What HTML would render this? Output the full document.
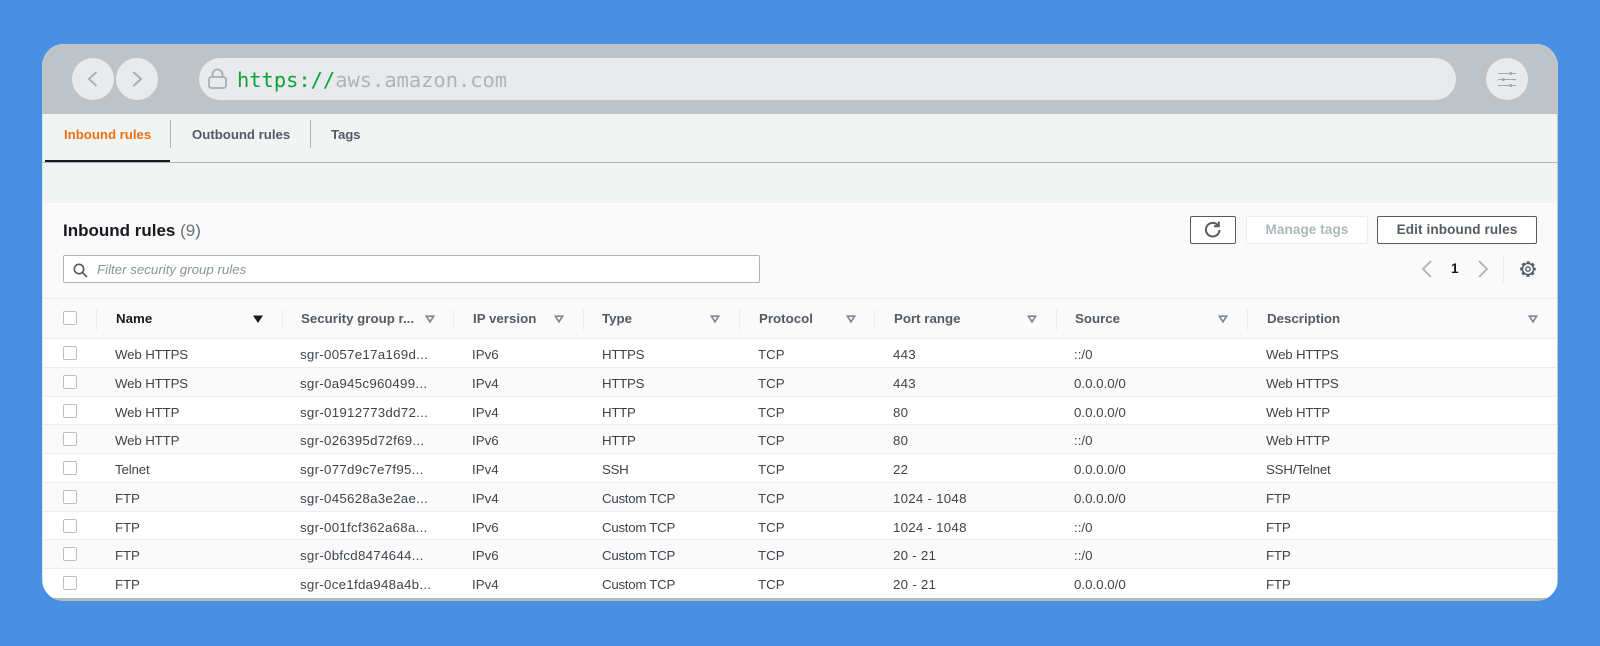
<!DOCTYPE html>
<html><head><meta charset="utf-8"><style>
html,body{margin:0;padding:0;width:1600px;height:646px;overflow:hidden;background:#4a90e2;font-family:"Liberation Sans",sans-serif}
*{box-sizing:border-box}
.a{position:absolute}
#win{position:absolute;left:42px;top:44px;width:1516px;height:557px;border-radius:22px;overflow:hidden;background:#f2f3f3}
#stage{position:absolute;left:-42px;top:-44px;width:1600px;height:646px}
.circ{position:absolute;width:42px;height:42px;border-radius:50%;background:#e8eaed;top:58px}
.tab{position:absolute;top:126px;font-size:13.2px;line-height:17px;font-weight:bold;color:#545b64;white-space:nowrap}
.btn{position:absolute;top:216px;height:28px;background:#fff;border:1px solid #545b64;border-radius:2px;font-size:13.5px;font-weight:bold;color:#545b64;text-align:center;line-height:26px;letter-spacing:.12px}
.h{position:absolute;top:311px;font-size:13.3px;line-height:16px;font-weight:bold;color:#545b64;white-space:nowrap}
.sep{position:absolute;top:309px;height:21px;width:1px;background:#eaeded}
.cb{position:absolute;left:63px;width:14px;height:14px;border:1px solid #b8c2c3;border-radius:2px;background:#fff}
.r{position:absolute;left:43px;width:1514px;height:29px;background:#fff;border-bottom:1px solid #eaeded;font-size:13.3px;line-height:16px;color:#16191f}
.r.g{background:#fafafa}
.r span{position:absolute;top:8px;white-space:nowrap;color:#3f444c}
.r .cb{left:20px;top:7px}
.c1{left:72px;letter-spacing:-.15px}.c2{left:257px;letter-spacing:.28px}.c3{left:429px}.c4{left:559px;letter-spacing:-.28px}.c5{left:715px}.c6{left:850px;letter-spacing:.25px}.c7{left:1031px}.c8{left:1223px;letter-spacing:-.2px}
.tri{position:absolute;top:314px}
</style></head><body>
<div id="win"><div id="stage">
<div class="a" style="left:0;top:0;width:1600px;height:114px;background:#bdc3c7"></div>

<div class="circ" style="left:72px"><svg width="42" height="42" style="position:absolute;left:0;top:0"><path d="M24.500 14 L17 21 L24.500 28" fill="none" stroke="#a4a9ad" stroke-width="1.800"/></svg></div>
<div class="circ" style="left:116px"><svg width="42" height="42" style="position:absolute;left:0;top:0"><path d="M17.500 14 L25 21 L17.500 28" fill="none" stroke="#a4a9ad" stroke-width="1.800"/></svg></div>
<div class="a" style="left:199px;top:58px;width:1257px;height:42px;border-radius:21px;background:#e8eaed"></div>
<svg class="a" style="left:207px;top:68px" width="22" height="22"><rect x="2" y="9" width="17" height="11" rx="2.500" fill="none" stroke="#a9adb0" stroke-width="1.800"/><path d="M5.500 9 V6.500 a5 5 0 0 1 10 0 V9" fill="none" stroke="#a9adb0" stroke-width="1.800"/></svg>
<div class="a" style="left:237px;top:67px;font-family:'DejaVu Sans Mono',monospace;font-size:20.4px;line-height:26px;white-space:nowrap;color:#b0b4b7"><span style="color:#0aa537">https://</span>aws.amazon.com</div>
<div class="circ" style="left:1486px"><svg width="42" height="42" style="position:absolute;left:0;top:0"><g stroke="#a4a9ad" stroke-width="1" fill="#a4a9ad"><path d="M12 15.500 H30M12 21.500 H30M12 27.500 H30"/><rect x="23.500" y="14" width="2.500" height="3" stroke="none"/><rect x="16" y="20" width="2.500" height="3" stroke="none"/><rect x="23.500" y="26" width="2.500" height="3" stroke="none"/></g></svg></div>

<div class="tab" style="left:64px;color:#ec7211">Inbound rules</div>
<div class="a" style="left:170px;top:120px;width:1px;height:28px;background:#aab7b8"></div>
<div class="tab" style="left:192px">Outbound rules</div>
<div class="a" style="left:310px;top:120px;width:1px;height:28px;background:#aab7b8"></div>
<div class="tab" style="left:331px;letter-spacing:-.1px">Tags</div>
<div class="a" style="left:42px;top:162px;width:1516px;height:1px;background:#aab7b8"></div>
<div class="a" style="left:45px;top:160px;width:125px;height:2px;background:#16191f"></div>

<div class="a" style="left:43px;top:202px;width:1514px;height:396px;background:#fafafa;border-top:1px solid #f0f1f1"></div>
<div class="a" style="left:63px;top:220px;font-size:17px;line-height:21px;font-weight:bold;color:#16191f;white-space:nowrap">Inbound rules <span style="font-weight:normal;color:#687078">(9)</span></div>

<div class="btn" style="left:1190px;width:46px"><svg width="20" height="20" style="position:absolute;left:12px;top:3px"><path d="M14.800 5.200 A6.800 6.800 0 1 0 16.500 10" fill="none" stroke="#545b64" stroke-width="2"/><path d="M15.800 1.500 V6.300 H11" fill="none" stroke="#545b64" stroke-width="2"/></svg></div>
<div class="btn" style="left:1246px;width:122px;border-color:#eaeded;color:#aab7b8">Manage tags</div>
<div class="btn" style="left:1377px;width:160px">Edit inbound rules</div>

<div class="a" style="left:63px;top:255px;width:697px;height:28px;background:#fff;border:1px solid #aab7b8;border-radius:2px"></div>
<svg class="a" style="left:73px;top:263px" width="15" height="15"><circle cx="6" cy="6" r="4.700" fill="none" stroke="#545b64" stroke-width="1.600"/><path d="M9.500 9.500 L14 14" stroke="#545b64" stroke-width="1.800"/></svg>
<div class="a" style="left:97px;top:262px;font-size:13.3px;line-height:16px;font-style:italic;color:#879596;white-space:nowrap">Filter security group rules</div>

<svg class="a" style="left:1419px;top:259px" width="16" height="20"><path d="M12 2 L4 10 L12 18" fill="none" stroke="#aab7b8" stroke-width="1.800"/></svg>
<div class="a" style="left:1451px;top:261px;font-size:13.5px;line-height:16px;font-weight:bold;color:#16191f">1</div>
<svg class="a" style="left:1475px;top:259px" width="16" height="20"><path d="M4 2 L12 10 L4 18" fill="none" stroke="#aab7b8" stroke-width="1.800"/></svg>
<div class="a" style="left:1503px;top:255px;width:1px;height:28px;background:#eaeded"></div>
<svg class="a" style="left:1519px;top:260px" width="18" height="18"><circle cx="9" cy="9" r="2.200" fill="none" stroke="#545b64" stroke-width="1.400"/><circle cx="9" cy="9" r="5.600" fill="none" stroke="#545b64" stroke-width="1.500"/><circle cx="9" cy="9" r="7" fill="none" stroke="#545b64" stroke-width="1.600" stroke-dasharray="3.200 2.300" stroke-dashoffset="1.600"/></svg>

<div class="a" style="left:43px;top:298px;width:1514px;height:41px;background:#fafafa;border-top:1px solid #eaeded;border-bottom:1px solid #eaeded"></div>
<div class="cb" style="top:311px"></div>
<div class="sep" style="left:96px"></div><div class="sep" style="left:282px"></div><div class="sep" style="left:453px"></div><div class="sep" style="left:583px"></div><div class="sep" style="left:739px"></div><div class="sep" style="left:874px"></div><div class="sep" style="left:1056px"></div><div class="sep" style="left:1247px"></div>
<div class="h" style="left:116px;color:#16191f">Name</div>
<div class="h" style="left:301px">Security group r...</div>
<div class="h" style="left:473px">IP version</div>
<div class="h" style="left:602px">Type</div>
<div class="h" style="left:759px">Protocol</div>
<div class="h" style="left:894px">Port range</div>
<div class="h" style="left:1075px">Source</div>
<div class="h" style="left:1267px">Description</div>
<svg class="tri" style="left:252px" width="12" height="10"><path d="M1 1.500 H11 L6 9 Z" fill="#16191f"/></svg>
<svg class="tri" style="left:424px" width="12" height="10"><path d="M2.400 2.200 H9.600 L6 7.800 Z" fill="none" stroke="#7d8998" stroke-width="1.700"/></svg>
<svg class="tri" style="left:553px" width="12" height="10"><path d="M2.400 2.200 H9.600 L6 7.800 Z" fill="none" stroke="#7d8998" stroke-width="1.700"/></svg>
<svg class="tri" style="left:709px" width="12" height="10"><path d="M2.400 2.200 H9.600 L6 7.800 Z" fill="none" stroke="#7d8998" stroke-width="1.700"/></svg>
<svg class="tri" style="left:845px" width="12" height="10"><path d="M2.400 2.200 H9.600 L6 7.800 Z" fill="none" stroke="#7d8998" stroke-width="1.700"/></svg>
<svg class="tri" style="left:1026px" width="12" height="10"><path d="M2.400 2.200 H9.600 L6 7.800 Z" fill="none" stroke="#7d8998" stroke-width="1.700"/></svg>
<svg class="tri" style="left:1217px" width="12" height="10"><path d="M2.400 2.200 H9.600 L6 7.800 Z" fill="none" stroke="#7d8998" stroke-width="1.700"/></svg>
<svg class="tri" style="left:1527px" width="12" height="10"><path d="M2.400 2.200 H9.600 L6 7.800 Z" fill="none" stroke="#7d8998" stroke-width="1.700"/></svg>

<div class="r" style="top:339px"><div class="cb"></div><span class="c1">Web HTTPS</span><span class="c2">sgr-0057e17a169d...</span><span class="c3">IPv6</span><span class="c4">HTTPS</span><span class="c5">TCP</span><span class="c6">443</span><span class="c7">::/0</span><span class="c8">Web HTTPS</span></div>
<div class="r g" style="top:368px"><div class="cb"></div><span class="c1">Web HTTPS</span><span class="c2">sgr-0a945c960499...</span><span class="c3">IPv4</span><span class="c4">HTTPS</span><span class="c5">TCP</span><span class="c6">443</span><span class="c7">0.0.0.0/0</span><span class="c8">Web HTTPS</span></div>
<div class="r" style="top:397px;height:28px"><div class="cb"></div><span class="c1">Web HTTP</span><span class="c2">sgr-01912773dd72...</span><span class="c3">IPv4</span><span class="c4">HTTP</span><span class="c5">TCP</span><span class="c6">80</span><span class="c7">0.0.0.0/0</span><span class="c8">Web HTTP</span></div>
<div class="r g" style="top:425px"><div class="cb"></div><span class="c1">Web HTTP</span><span class="c2">sgr-026395d72f69...</span><span class="c3">IPv6</span><span class="c4">HTTP</span><span class="c5">TCP</span><span class="c6">80</span><span class="c7">::/0</span><span class="c8">Web HTTP</span></div>
<div class="r" style="top:454px"><div class="cb"></div><span class="c1">Telnet</span><span class="c2">sgr-077d9c7e7f95...</span><span class="c3">IPv4</span><span class="c4">SSH</span><span class="c5">TCP</span><span class="c6">22</span><span class="c7">0.0.0.0/0</span><span class="c8">SSH/Telnet</span></div>
<div class="r g" style="top:483px"><div class="cb"></div><span class="c1">FTP</span><span class="c2">sgr-045628a3e2ae...</span><span class="c3">IPv4</span><span class="c4">Custom TCP</span><span class="c5">TCP</span><span class="c6">1024 - 1048</span><span class="c7">0.0.0.0/0</span><span class="c8">FTP</span></div>
<div class="r" style="top:512px;height:28px"><div class="cb"></div><span class="c1">FTP</span><span class="c2">sgr-001fcf362a68a...</span><span class="c3">IPv6</span><span class="c4">Custom TCP</span><span class="c5">TCP</span><span class="c6">1024 - 1048</span><span class="c7">::/0</span><span class="c8">FTP</span></div>
<div class="r g" style="top:540px"><div class="cb"></div><span class="c1">FTP</span><span class="c2">sgr-0bfcd8474644...</span><span class="c3">IPv6</span><span class="c4">Custom TCP</span><span class="c5">TCP</span><span class="c6">20 - 21</span><span class="c7">::/0</span><span class="c8">FTP</span></div>
<div class="r" style="top:569px;border-bottom:none"><div class="cb"></div><span class="c1">FTP</span><span class="c2">sgr-0ce1fda948a4b...</span><span class="c3">IPv4</span><span class="c4">Custom TCP</span><span class="c5">TCP</span><span class="c6">20 - 21</span><span class="c7">0.0.0.0/0</span><span class="c8">FTP</span></div>

<div class="a" style="left:42px;top:598px;width:1516px;height:3px;background:#b4bcbd"></div>
<div class="a" style="left:1557px;top:114px;width:1px;height:487px;background:#c3cacb"></div>
<div class="a" style="left:42px;top:114px;width:1px;height:487px;background:#dfe3e4"></div>
</div></div>
</body></html>
